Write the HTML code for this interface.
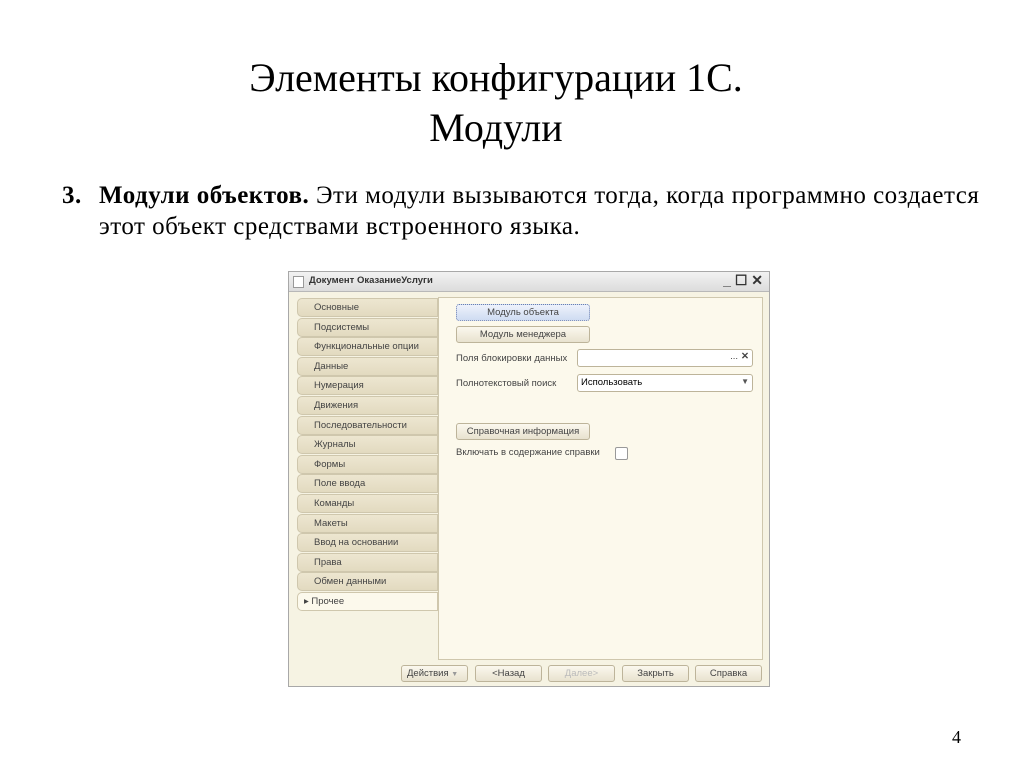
<!DOCTYPE html>
<html><head><meta charset="utf-8"><style>
body{margin:0;width:1024px;height:767px;background:#fff;position:relative;overflow:hidden;font-family:"Liberation Serif",serif;color:#000}
.t{position:absolute;left:0;width:992px;text-align:center;font-size:40px;line-height:44px}
.p{position:absolute;font-size:25px;line-height:28px;white-space:nowrap;letter-spacing:0.5px}
.dlg{position:absolute;left:288px;top:271px;width:482px;height:416px;background:#f6f3e3;border:1px solid #a8a8a8;box-sizing:border-box;font-family:"Liberation Sans",sans-serif;font-size:9.5px;color:#444}
.tb{position:absolute;left:0;top:0;width:100%;height:19px;background:linear-gradient(#f2f2f2,#dcdcdc);border-bottom:1px solid #b8b8b8}
.tab{position:absolute;left:8px;width:141px;height:19px;background:linear-gradient(#ede6d0,#e2dac0);border:1px solid #cfc7ad;border-radius:5px 0 0 5px;box-sizing:border-box;padding:3px 0 0 16px}
.pan{position:absolute;left:149px;top:25px;width:325px;height:363px;background:#fcf9ec;border:1px solid #cfc7ad;box-sizing:border-box}
.btn{position:absolute;height:17px;background:linear-gradient(#fbf8ee,#e8e2cf);border:1px solid #bdb49a;border-radius:3px;box-sizing:border-box;text-align:center;line-height:15px}
.lbl{position:absolute}
.inp{position:absolute;height:18px;background:#fff;border:1px solid #bdb49a;border-radius:3px;box-sizing:border-box}
</style></head><body>
<div class="t" style="top:56px">Элементы конфигурации 1С.</div>
<div class="t" style="top:106px">Модули</div>
<div class="p" style="left:62px;top:182px"><b>3.</b></div>
<div class="p" style="left:99px;top:182px"><b>Модули объектов.</b> Эти модули вызываются тогда, когда программно создается</div>
<div class="p" style="left:99px;top:213px">этот объект средствами встроенного языка.</div>
<div class="p" style="left:952px;top:723px;font-size:18px">4</div>
<div class="dlg">
<div class="tb"><div style="position:absolute;left:4px;top:4px;width:9px;height:10px;background:#fff;border:1px solid #999"></div><div style="position:absolute;left:20px;top:3px;font-weight:bold;color:#333">Документ ОказаниеУслуги</div><div style="position:absolute;right:6px;top:0;font-size:14px;font-weight:bold;color:#333">_&nbsp;☐&nbsp;✕</div></div>
<div class="tab" style="top:26px">Основные</div>
<div class="tab" style="top:45.6px">Подсистемы</div>
<div class="tab" style="top:65.2px">Функциональные опции</div>
<div class="tab" style="top:84.8px">Данные</div>
<div class="tab" style="top:104.4px">Нумерация</div>
<div class="tab" style="top:124px">Движения</div>
<div class="tab" style="top:143.6px">Последовательности</div>
<div class="tab" style="top:163.2px">Журналы</div>
<div class="tab" style="top:182.8px">Формы</div>
<div class="tab" style="top:202.4px">Поле ввода</div>
<div class="tab" style="top:222px">Команды</div>
<div class="tab" style="top:241.6px">Макеты</div>
<div class="tab" style="top:261.2px">Ввод на основании</div>
<div class="tab" style="top:280.8px">Права</div>
<div class="tab" style="top:300.4px">Обмен данными</div>
<div class="tab" style="top:320px;background:#fcf9ec;padding-left:6px">▸ Прочее</div>
<div class="pan"></div>
<div class="btn" style="left:167px;top:32px;width:134px;background:linear-gradient(#eef2fb,#cfdcf2);border:1px dotted #6a7fb0">Модуль объекта</div>
<div class="btn" style="left:167px;top:54px;width:134px">Модуль менеджера</div>
<div class="lbl" style="left:167px;top:81px">Поля блокировки данных</div>
<div class="inp" style="left:288px;top:77px;width:176px"><span style="position:absolute;right:14px;top:1px">...</span><span style="position:absolute;right:3px;top:1px;font-weight:bold">✕</span></div>
<div class="lbl" style="left:167px;top:106px">Полнотекстовый поиск</div>
<div class="inp" style="left:288px;top:102px;width:176px;padding:2px 0 0 3px;color:#000">Использовать<span style="position:absolute;right:3px;top:2px;font-size:8px;color:#555">▼</span></div>
<div class="btn" style="left:167px;top:151px;width:134px">Справочная информация</div>
<div class="lbl" style="left:167px;top:175px">Включать в содержание справки</div>
<div style="position:absolute;left:326px;top:175px;width:11px;height:11px;border:1px solid #999;border-radius:2px;background:#fff"></div>
<div class="btn" style="left:112px;top:393px;width:67px;text-align:left;padding-left:5px">Действия <span style="color:#999;font-size:7px">▼</span></div>
<div class="btn" style="left:186px;top:393px;width:67px">&lt;Назад</div>
<div class="btn" style="left:259px;top:393px;width:67px;color:#bbb">Далее&gt;</div>
<div class="btn" style="left:333px;top:393px;width:67px">Закрыть</div>
<div class="btn" style="left:406px;top:393px;width:67px">Справка</div>
</div>
</body></html>
